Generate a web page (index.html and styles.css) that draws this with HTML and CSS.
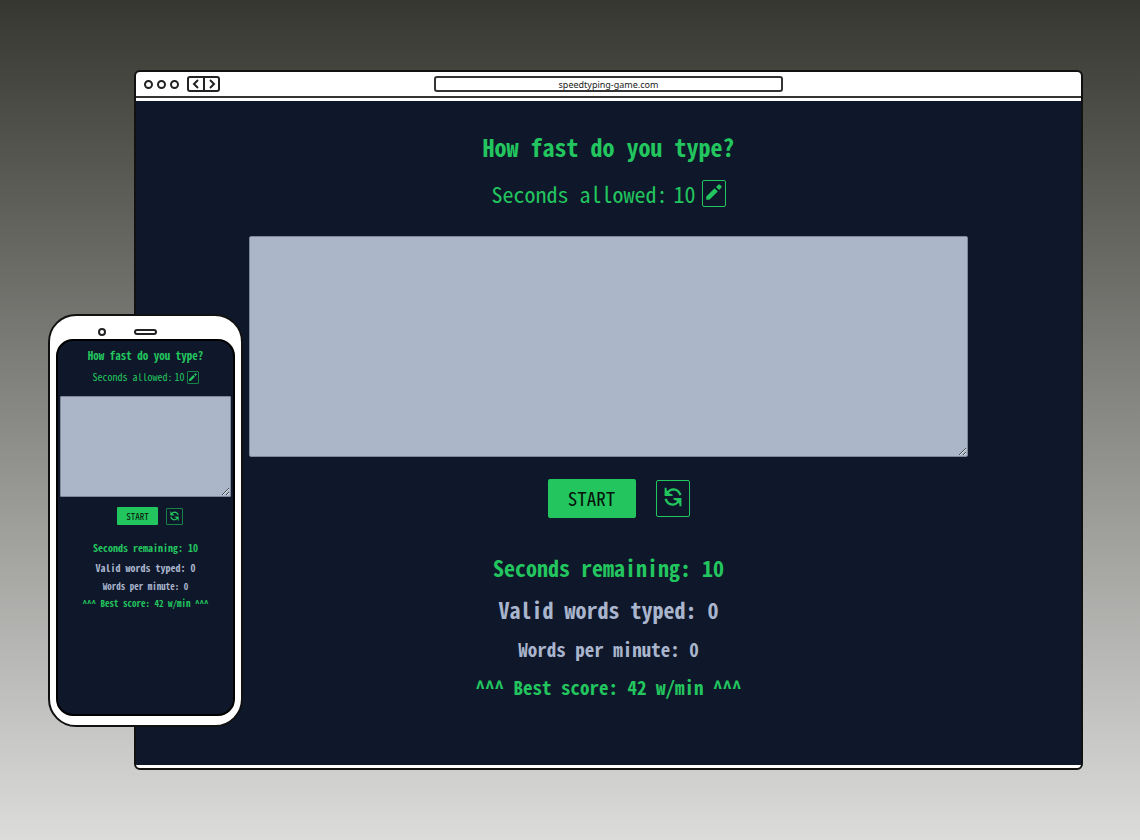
FILE: index.html
```html
<!DOCTYPE html>
<html lang="en">
<head>
<meta charset="utf-8">
<title>Speed typing game</title>
<link rel="stylesheet" href="styles.css">
</head>
<body>
<svg class="sprite" aria-hidden="true">
  <symbol id="pencil" viewBox="0 0 16 16"><path fill="currentColor" d="M0.2 15.8 V12.6 L8.6 4.2 L11.8 7.4 L3.4 15.8 Z M10 2.9 L12.3 0.7 Q13.1 0 13.9 0.7 L15.3 2.1 Q16 2.9 15.3 3.7 L13.1 6 Z"/></symbol>
  <symbol id="refresh" viewBox="0 0 18 20"><g fill="none" stroke="currentColor" stroke-width="2.4"><path d="M3 6.5 Q5.5 2.4 9.5 2.4 Q14.5 2.6 16.4 8.2"/><path d="M15 13.5 Q12.5 17.6 8.5 17.6 Q3.5 17.4 1.6 11.8"/></g><path fill="currentColor" d="M0.6 0.8 V9 H8.6 V7.4 L5.6 6.6 L2.6 3 V0.8 Z M17.4 19.2 V11 H9.4 V12.6 L12.4 13.4 L15.4 17 V19.2 Z"/></symbol>
</svg>
<main class="stage">
  <section class="browser">
    <header class="toolbar">
      <div class="controls">
        <span class="dot"></span><span class="dot"></span><span class="dot"></span>
        <div class="nav">
          <button class="nav-btn" aria-label="Back"><svg class="chevron" viewBox="0 0 8 10"><path d="M6 1 L2 5 L6 9"/></svg></button>
          <button class="nav-btn" aria-label="Forward"><svg class="chevron" viewBox="0 0 8 10"><path d="M2 1 L6 5 L2 9"/></svg></button>
        </div>
      </div>
      <input class="address" type="text" aria-label="Address" value="speedtyping-game.com">
    </header>
    <div class="game">
      <h1 class="title">How fast do you type?</h1>
      <div class="allowed"><span>Seconds allowed:</span><span>10</span><button class="edit" aria-label="Edit seconds"><svg class="edit-icon"><use href="#pencil"/></svg></button></div>
      <textarea class="entry" aria-label="Typing area"></textarea>
      <div class="actions"><button class="start">START</button><button class="reset" aria-label="Restart"><svg class="reset-icon"><use href="#refresh"/></svg></button></div>
      <p class="stat remaining">Seconds remaining: 10</p>
      <p class="stat">Valid words typed: 0</p>
      <p class="stat minor">Words per minute: 0</p>
      <p class="stat minor best">^^^ Best score: 42 w/min ^^^</p>
    </div>
  </section>
  <section class="phone">
    <div class="sensors"><span class="camera"></span><span class="speaker"></span></div>
    <div class="game compact">
      <h2 class="title">How fast do you type?</h2>
      <div class="allowed"><span>Seconds allowed:</span><span>10</span><button class="edit" aria-label="Edit seconds"><svg class="edit-icon"><use href="#pencil"/></svg></button></div>
      <textarea class="entry" aria-label="Typing area"></textarea>
      <div class="actions"><button class="start">START</button><button class="reset" aria-label="Restart"><svg class="reset-icon"><use href="#refresh"/></svg></button></div>
      <p class="stat remaining">Seconds remaining: 10</p>
      <p class="stat">Valid words typed: 0</p>
      <p class="stat minor">Words per minute: 0</p>
      <p class="stat minor best">^^^ Best score: 42 w/min ^^^</p>
    </div>
  </section>
</main>
</body>
</html>
```
FILE: styles.css
```css
* { box-sizing: border-box; }
body { margin: 0; background: linear-gradient(#363730, #dcdcdb); }
button, input, textarea { font: inherit; color: inherit; margin: 0; padding: 0; background: none; }
button { cursor: pointer; }
.sprite { position: absolute; width: 0; height: 0; }

.stage {
  position: relative;
  display: flex;
  min-height: 100vh;
  padding: 70px 57px 70px 134px;
}

.browser {
  display: flex;
  flex: 1;
  flex-direction: column;
  overflow: hidden;
  border: 2px solid #111;
  border-radius: 6px;
  background: #fff;
  padding-bottom: 3px;
}
.toolbar {
  display: grid;
  grid-template-columns: 1fr 349px 1fr;
  align-items: center;
  height: 26px;
  margin-bottom: 3px;
  border-bottom: 2px solid #333;
}
.controls { display: flex; align-items: center; gap: 4px; padding-left: 8px; }
.dot { width: 9px; height: 9px; border: 2px solid #222; border-radius: 50%; }
.nav { display: flex; margin-left: 4px; border: 2px solid #222; border-radius: 3px; height: 16px; }
.nav-btn { display: flex; align-items: center; justify-content: center; width: 14px; border: 0; }
.nav-btn + .nav-btn { width: 15px; border-left: 2px solid #222; }
.chevron { width: 8px; height: 10px; fill: none; stroke: #222; stroke-width: 2; }
.address {
  width: 100%;
  height: 16px;
  border: 2px solid #333;
  border-radius: 3px;
  font: 9px "Noto Sans", sans-serif;
  text-align: center;
  color: #222;
}

.game {
  display: flex;
  flex: 1;
  flex-direction: column;
  align-items: center;
  background: #0f172a;
  color: #22c55e;
  font-family: "Noto Sans Mono CJK SC", "DejaVu Sans Mono", monospace;
  font-size: 22px;
  padding: 30px 0 0;
}
.title { margin: 0; font-size: 24px; line-height: 32px; font-weight: 700; }
.allowed { display: flex; align-items: center; gap: 6px; height: 28px; margin-top: 16px; line-height: 26px; }
.edit { display: flex; align-items: center; justify-content: center; width: 24px; height: 27px; border: 1px solid #22c55e; border-radius: 2px; padding-bottom: 2px; }
.edit-icon { width: 16px; height: 16px; }
.entry {
  width: 76%;
  height: 221px;
  margin-top: 29px;
  border: 1px solid #7d899b;
  border-radius: 2px;
  background: #abb7c9;
  color: #0f172a;
}
.actions { display: flex; align-items: center; gap: 20px; margin: 22px 0 33px 20px; }
.start { width: 88px; height: 39px; border: 0; border-radius: 2px; background: #22c55e; color: #06120b; font-size: 19px; padding-bottom: 2px; }
.reset { display: flex; align-items: center; justify-content: center; width: 34px; height: 37px; border: 1px solid #22c55e; border-radius: 2px; padding-bottom: 3px; }
.reset-icon { width: 18px; height: 20px; }
.stat { margin: 0 0 10px; line-height: 32px; font-weight: 700; color: #a9b5cd; white-space: nowrap; }
.minor { margin-bottom: 10px; font-size: 19px; line-height: 28px; }
.remaining, .best { color: #22c55e; }

.phone {
  position: absolute;
  left: 48px;
  top: 314px;
  display: flex;
  flex-direction: column;
  width: 195px;
  height: 413px;
  padding: 0 6px 9px;
  border: 2px solid #111;
  border-radius: 28px;
  background: #fff;
}
.sensors { display: flex; align-items: center; gap: 28px; height: 23px; padding: 9px 0 0 42px; }
.camera { width: 8px; height: 8px; border: 2px solid #222; border-radius: 50%; }
.speaker { width: 23px; height: 6px; border: 2px solid #222; border-radius: 3px; }

.compact { border: 2px solid #000; border-radius: 17px; font-size: 10px; padding: 6px 2px 0; }
.compact .title { font-size: 11px; line-height: 16px; }
.compact .allowed { height: 14px; margin-top: 7px; gap: 2px; line-height: 14px; }
.compact .edit { width: 12px; height: 13px; border-color: #178245; border-radius: 1px; padding: 0; }
.compact .edit-icon { width: 8px; height: 8px; }
.compact .entry { width: 100%; height: 101px; margin-top: 12px; border-radius: 1px; }
.compact .actions { gap: 8px; margin: 10px 0 15px 9px; }
.compact .start { width: 41px; height: 18px; border-radius: 1px; font-size: 9px; padding: 0; }
.compact .reset { width: 17px; height: 17px; border-color: #178245; border-radius: 1px; padding: 0; }
.compact .reset-icon { width: 9px; height: 10px; }
.compact .stat { margin-bottom: 4px; line-height: 16px; }
.compact .minor { margin-bottom: 3px; font-size: 9px; line-height: 14px; }
```
